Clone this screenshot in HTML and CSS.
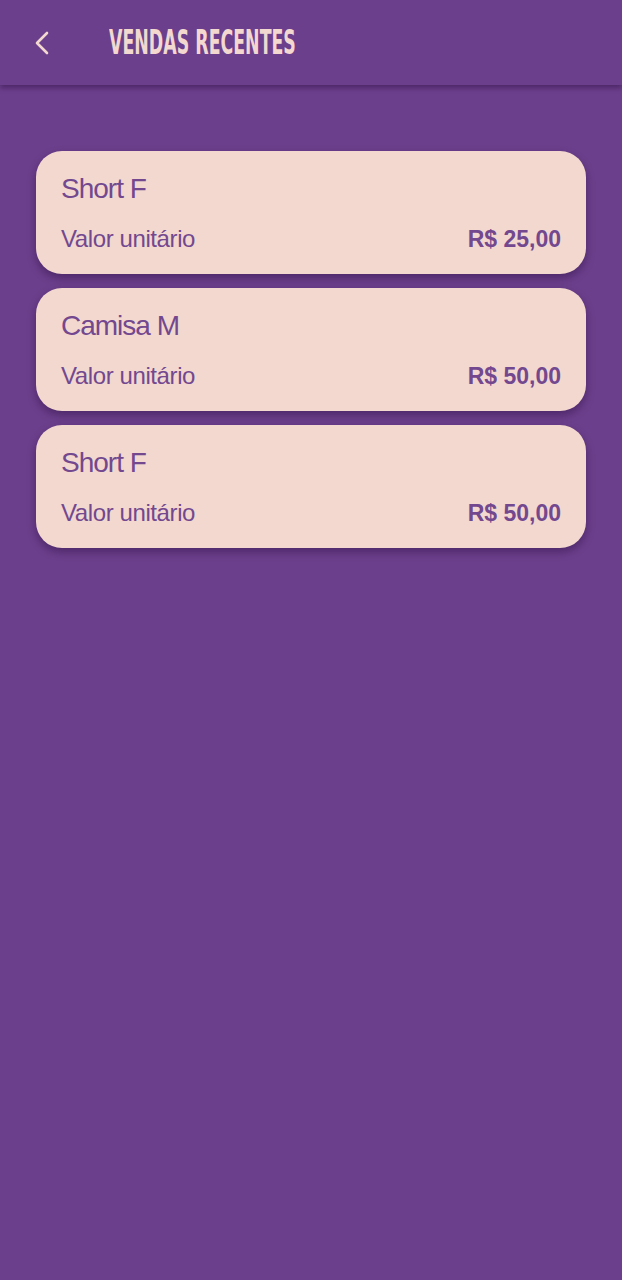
FILE: index.html
```html
<!DOCTYPE html>
<html lang="pt-BR">
<head>
<meta charset="utf-8">
<link rel="stylesheet" href="styles.css">
</head>
<body>
<header class="appbar">
  <button class="back" aria-label="Voltar">
    <svg width="16" height="24" viewBox="0 0 16 24"><path d="M13 2 L3 12 L13 22" fill="none" stroke="#f2d8cf" stroke-width="2.6" stroke-linecap="round" stroke-linejoin="round"/></svg>
  </button>
  <h1 class="title">VENDAS RECENTES</h1>
</header>
<main class="list">
  <div class="card">
    <div class="name">Short F</div>
    <div class="row"><span class="label">Valor unitário</span><span class="price">R$ 25,00</span></div>
  </div>
  <div class="card">
    <div class="name">Camisa M</div>
    <div class="row"><span class="label">Valor unitário</span><span class="price">R$ 50,00</span></div>
  </div>
  <div class="card">
    <div class="name">Short F</div>
    <div class="row"><span class="label">Valor unitário</span><span class="price">R$ 50,00</span></div>
  </div>
</main>
</body>
</html>
```
FILE: styles.css
```css
html, body {
  margin: 0;
  padding: 0;
  background: #6c3f8c;
  height: 100%;
}
body {
  font-family: "Liberation Sans", Arial, sans-serif;
}
.appbar {
  height: 85px;
  display: flex;
  align-items: center;
  background: #6c3f8c;
  box-shadow: 0 3px 5px rgba(40, 10, 60, 0.45);
  position: relative;
  z-index: 1;
}
.back {
  background: none;
  border: none;
  padding: 0;
  margin-left: 34px;
  width: 16px;
  height: 24px;
  display: flex;
  align-items: center;
  justify-content: center;
}
.title {
  margin: 0 0 0 59px;
  font-family: "DejaVu Sans Condensed", sans-serif;
  font-weight: 700;
  font-size: 33px;
  line-height: 40px;
  color: #f2d8cf;
  white-space: nowrap;
  transform: scaleX(0.585);
  transform-origin: left center;
}
.list {
  padding: 66px 36px 0 36px;
  display: flex;
  flex-direction: column;
  gap: 14px;
}
.card {
  background: #f2d8cf;
  border-radius: 26px;
  height: 123px;
  box-sizing: border-box;
  padding: 22px 25px 0 25px;
  box-shadow: 0 4px 8px rgba(40, 10, 60, 0.45);
  color: #73488f;
}
.name {
  font-size: 28px;
  line-height: 32px;
  letter-spacing: -1px;
}
.row {
  display: flex;
  justify-content: space-between;
  align-items: baseline;
  margin-top: 20px;
  font-size: 24px;
  line-height: 28px;
}
.label {
  letter-spacing: -0.4px;
}
.price {
  font-weight: 700;
  font-size: 23px;
}
```
